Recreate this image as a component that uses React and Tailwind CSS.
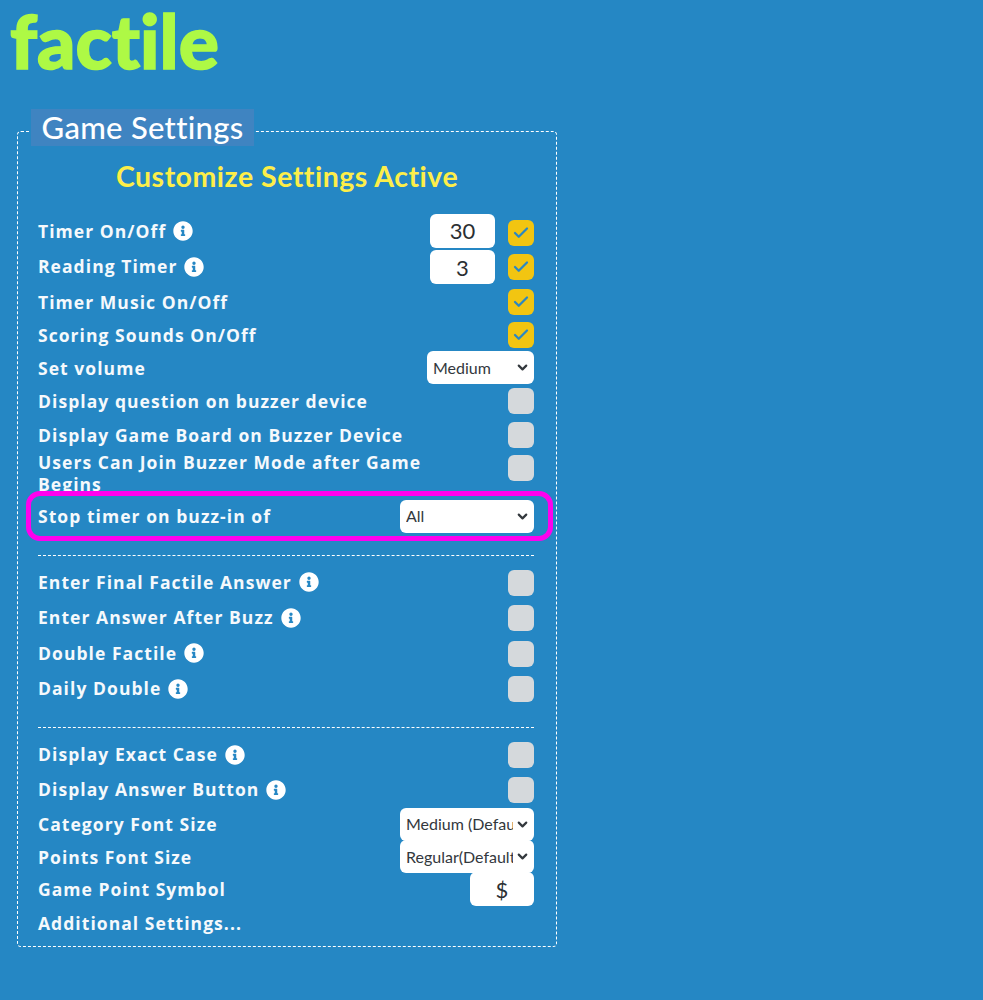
import { FaInfoCircle } from 'react-icons/fa'
import { Check, ChevronDown } from 'lucide-react'

const font = { fontFamily: 'Lato, "Open Sans", sans-serif' }

const InfoIcon = () => <FaInfoCircle className="ml-[7px] inline-block h-[20px] w-[20px] -translate-y-[2px] text-white" />

const Checkbox = ({ checked, className = '' }) => (
  <div className={`flex h-[26px] w-[26px] shrink-0 items-center justify-center rounded-md ${checked ? 'bg-[#f2c511]' : 'bg-[#d5d9dc]'} ${className}`}>
    {checked && <Check className="h-[18px] w-[18px] text-[#2a87c4]" strokeWidth={3} />}
  </div>
)

const Select = ({ value, className }) => (
  <div className={`relative h-[33px] shrink-0 ${className}`}>
    <select
      defaultValue={value}
      className="h-full w-full appearance-none overflow-hidden rounded-md bg-white pl-[6px] pr-[21px] text-[16px] text-[#33383d] outline-none"
    >
      <option>{value}</option>
    </select>
    <ChevronDown className="pointer-events-none absolute right-[4px] top-[9px] h-[15px] w-[15px] text-[#33383d]" strokeWidth={3.5} />
  </div>
)

const NumberBox = ({ value, className }) => (
  <div className={`flex h-[34px] items-center justify-center rounded-md bg-white text-[22px] text-[#2b2f33] ${className}`}>
    {value}
  </div>
)

const Label = ({ children, info }) => (
  <span className="text-[17.5px] font-bold leading-[22px] tracking-[1.05px] text-[#f5f9fc]" style={{ fontFamily: '"Open Sans", sans-serif' }}>
    {children}
    {info && <InfoIcon />}
  </span>
)

const Row = ({ h, label, info, children }) => (
  <div className={`flex items-center justify-between ${h}`}>
    <Label info={info}>{label}</Label>
    <div className="flex items-center">{children}</div>
  </div>
)

const Divider = ({ className }) => <div className={`border-t border-dashed border-white ${className}`} />

export default function App() {
  return (
    <div className="min-h-[1000px] bg-[#2587c4]" style={font}>
      {/* Logo */}
      <div className="h-[131px] pl-[10px]">
        <div className="text-[75px] font-black leading-[80px] text-[#aef945] [-webkit-text-stroke:1.5px_#aef945] [font-variant-ligatures:none]">factile</div>
      </div>

      {/* Game Settings panel */}
      <div className="ml-[17px] h-[816px] w-[540px] rounded-[4px] border border-dashed border-white">
        <div className="-mt-[23px] ml-[13px] flex h-[37px] w-[223px] items-center justify-center bg-[#3f84c1] text-[31px] font-medium tracking-[0.3px] text-white">
          Game Settings
        </div>
        <div className="mt-[13px] text-center text-[28.5px] font-bold leading-[34px] tracking-[0.5px] text-[#fdee49]">
          Customize Settings Active
        </div>

        <div className="ml-[20px] mt-[21px] w-[496px]">
          <Row h="h-[35px]" label="Timer On/Off" info>
            <NumberBox value="30" className="mr-[13px] w-[65px] -translate-y-[1px]" />
            <Checkbox checked className="translate-y-[1px]" />
          </Row>
          <Row h="h-[36px]" label="Reading Timer" info>
            <NumberBox value="3" className="mr-[13px] w-[65px]" />
            <Checkbox checked />
          </Row>
          <Row h="h-[34px]" label="Timer Music On/Off">
            <Checkbox checked />
          </Row>
          <Row h="h-[32px]" label="Scoring Sounds On/Off">
            <Checkbox checked />
          </Row>
          <Row h="h-[33px]" label="Set volume">
            <Select value="Medium" className="w-[107px]" />
          </Row>
          <Row h="h-[34px]" label="Display question on buzzer device">
            <Checkbox />
          </Row>
          <Row h="h-[33px]" label="Display Game Board on Buzzer Device">
            <Checkbox />
          </Row>
          <div className="flex h-[40px] items-start justify-between">
            <div className="flex w-[420px]">
              <Label>Users Can Join Buzzer Mode after Game Begins</Label>
            </div>
            <div className="pt-[4px]">
              <Checkbox />
            </div>
          </div>

          {/* highlighted row */}
          <div className="relative -ml-[12px] -mr-[19px] flex h-[50px] items-center justify-between rounded-[14px] border-[5px] border-[#ff00ee] pl-[7px] pr-[14px]">
            <Label>Stop timer on buzz-in of</Label>
            <Select value="All" className="w-[134px]" />
          </div>

          <Divider className="mt-[14px]" />
          <div className="mt-[9px]">
            <Row h="h-[35px]" label="Enter Final Factile Answer" info>
              <Checkbox />
            </Row>
            <Row h="h-[36px]" label="Enter Answer After Buzz" info>
              <Checkbox />
            </Row>
            <Row h="h-[35px]" label="Double Factile" info>
              <Checkbox />
            </Row>
            <Row h="h-[36px]" label="Daily Double" info>
              <Checkbox />
            </Row>
          </div>

          <Divider className="mt-[20px]" />
          <div className="mt-[9px]">
            <Row h="h-[36px]" label="Display Exact Case" info>
              <Checkbox />
            </Row>
            <Row h="h-[34px]" label="Display Answer Button" info>
              <Checkbox />
            </Row>
            <Row h="h-[34px]" label="Category Font Size">
              <Select value="Medium (Default)" className="w-[134px]" />
            </Row>
            <Row h="h-[31px]" label="Points Font Size">
              <Select value="Regular(Default)" className="w-[134px]" />
            </Row>
            <Row h="h-[34px]" label="Game Point Symbol">
              <NumberBox value="$" className="h-[33px] w-[64px]" />
            </Row>
            <Row h="h-[33px]" label="Additional Settings..." />
          </div>
        </div>
      </div>
    </div>
  )
}
